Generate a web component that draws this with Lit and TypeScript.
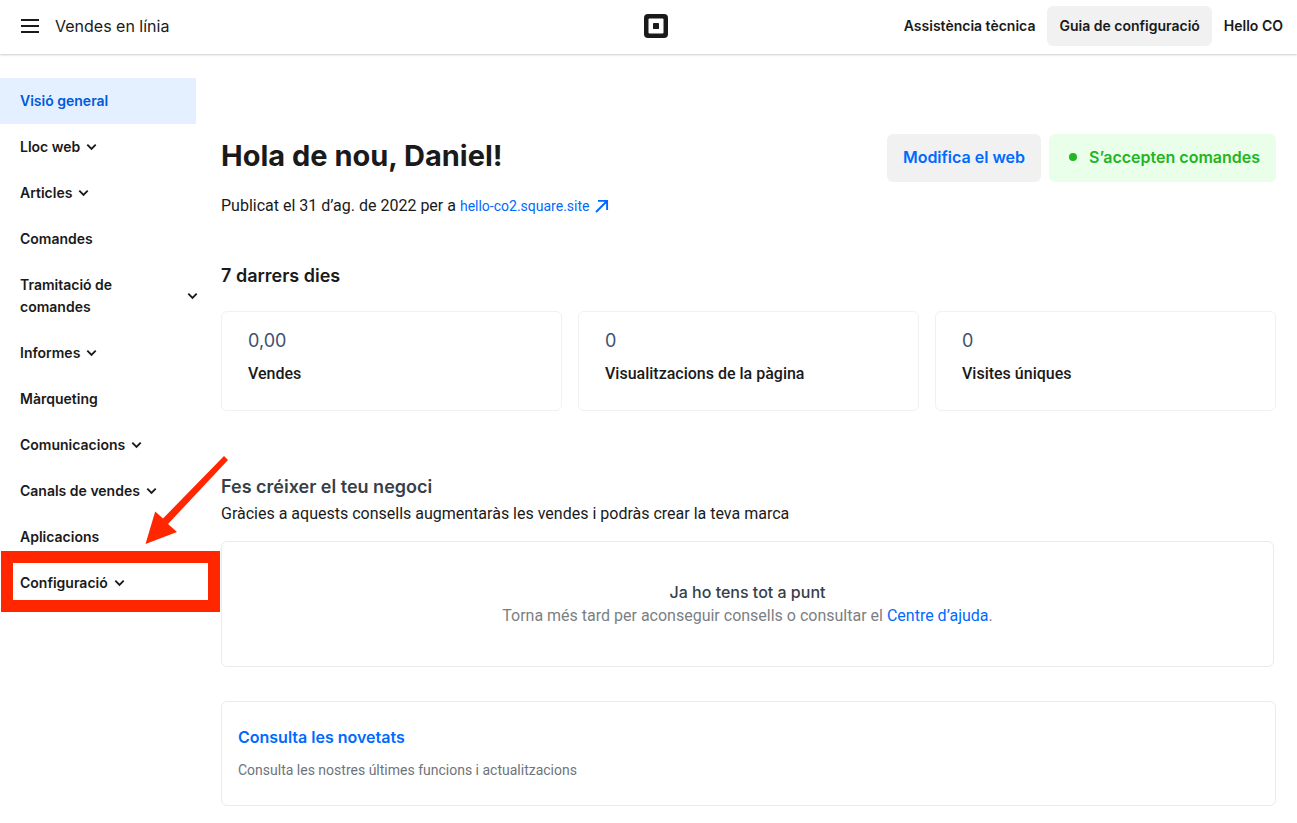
import { LitElement, html, svg, css, nothing } from "lit";
import { customElement } from "lit/decorators.js";
import { classMap } from "lit/directives/class-map.js";

interface NavItem {
  label: string;
  expandable?: boolean;
  active?: boolean;
  wide?: boolean;
  marked?: boolean;
}

const NAV: NavItem[] = [
  { label: "Visió general", active: true },
  { label: "Lloc web", expandable: true },
  { label: "Articles", expandable: true },
  { label: "Comandes" },
  { label: "Tramitació de\ncomandes", expandable: true, wide: true },
  { label: "Informes", expandable: true },
  { label: "Màrqueting" },
  { label: "Comunicacions", expandable: true },
  { label: "Canals de vendes", expandable: true },
  { label: "Aplicacions" },
  { label: "Configuració", expandable: true, marked: true },
];

const STATS = [
  { value: "0,00", label: "Vendes" },
  { value: "0", label: "Visualitzacions de la pàgina" },
  { value: "0", label: "Visites úniques" },
];

const chevron = html`<svg class="chevron" width="11" height="8" viewBox="0 0 11 8" aria-hidden="true">
  ${svg`<path d="M1.3 1.6 5.5 5.8 9.7 1.6" fill="none" stroke="currentColor" stroke-width="1.9"/>`}
</svg>`;

@customElement("app-header")
export class AppHeader extends LitElement {
  static styles = css`
    :host {
      display: block;
      font-family: Inter, sans-serif;
      color: #1a1a1a;
    }
    .bar {
      display: grid;
      grid-template-columns: 1fr auto 1fr;
      align-items: center;
      height: 54px;
      padding: 0 14px 2px 20px;
      box-sizing: border-box;
      box-shadow: 0 1px 2px rgba(0, 0, 0, 0.2);
    }
    .left {
      display: flex;
      align-items: center;
      gap: 15px;
      font-size: 16px;
      line-height: 24px;
    }
    button {
      font: inherit;
      color: inherit;
      border: 0;
      background: none;
      padding: 0;
      cursor: pointer;
    }
    .menu {
      display: flex;
    }
    .logo {
      display: flex;
      padding-left: 8px;
    }
    .right {
      display: flex;
      justify-content: flex-end;
      align-items: center;
      gap: 12px;
      font-size: 14px;
      font-weight: 600;
    }
    .guide {
      height: 40px;
      padding: 0 12px;
      border-radius: 6px;
      background: #f1f1f1;
    }
  `;

  render() {
    return html`<header class="bar">
      <div class="left">
        <button class="menu" aria-label="Menú">
          <svg width="20" height="16" viewBox="0 0 20 16" aria-hidden="true">
            <path d="M1 2h18M1 8h18M1 14h18" stroke="#1a1a1a" stroke-width="2" />
          </svg>
        </button>
        <span>Vendes en línia</span>
      </div>
      <a class="logo" href="#" aria-label="Square">
        <svg width="24" height="24" viewBox="0 0 24 24" aria-hidden="true">
          <rect width="24" height="24" rx="4" fill="#1a1a1a" />
          <rect x="4.5" y="4.5" width="15" height="15" rx="1" fill="#fff" />
          <rect x="9" y="9" width="6" height="6" rx="0.4" fill="#1a1a1a" />
        </svg>
      </a>
      <div class="right">
        <button>Assistència tècnica</button>
        <button class="guide">Guia de configuració</button>
        <button>Hello CO</button>
      </div>
    </header>`;
  }
}

@customElement("side-nav")
export class SideNav extends LitElement {
  static styles = css`
    :host {
      display: block;
      font-family: Inter, sans-serif;
      color: #1a1a1a;
    }
    ul {
      list-style: none;
      margin: 0;
      padding: 0;
    }
    li {
      position: relative;
    }
    .item {
      display: flex;
      align-items: center;
      gap: 6px;
      padding: 12px 0 12px 20px;
      font-size: 14px;
      line-height: 22px;
      font-weight: 600;
      color: inherit;
      text-decoration: none;
      white-space: pre-line;
    }
    .active {
      background: #e4f0ff;
      color: #005ad9;
    }
    .wide {
      justify-content: space-between;
      margin-right: -2px;
    }
    .chevron {
      flex: none;
    }
    .frame {
      position: absolute;
      inset: -9px -24px -6px 1px;
      border: 12px solid #ff2600;
      pointer-events: none;
    }
    .arrow {
      position: absolute;
      left: 145px;
      bottom: 62px;
      pointer-events: none;
    }
  `;

  render() {
    return html`<nav>
      <ul>
        ${NAV.map(
          (item) => html`<li>
            <a class=${classMap({ item: true, active: !!item.active, wide: !!item.wide })} href="#">
              <span>${item.label}</span>${item.expandable ? chevron : nothing}
            </a>
            ${item.marked
              ? html`<div class="frame"></div>
                  <svg class="arrow" width="84" height="88" viewBox="0 0 84 88" aria-hidden="true">
                    <path d="M0.5 88 10.2 55.5 18 62.5 79 0 83 4 23 68 32 76Z" fill="#ff2600" />
                  </svg>`
              : nothing}
          </li>`,
        )}
      </ul>
    </nav>`;
  }
}

@customElement("app-root")
export class AppRoot extends LitElement {
  static styles = css`
    :host {
      display: block;
      min-height: 100vh;
      background: #fff;
      color: #1a1a1a;
      font-family: Roboto, sans-serif;
      font-size: 16px;
      line-height: 24px;
    }
    .layout {
      display: grid;
      grid-template-columns: 196px minmax(0, 1fr);
      column-gap: 25px;
      padding: 24px 21px 17px 0;
    }
    main {
      padding-top: 56px;
    }
    h1,
    h2,
    h3,
    p {
      margin: 0;
    }
    a {
      color: #006aff;
      text-decoration: none;
    }
    .top {
      display: flex;
      justify-content: space-between;
      align-items: flex-start;
    }
    h1 {
      font-family: Inter, sans-serif;
      font-size: 29px;
      line-height: 44px;
      font-weight: 700;
    }
    .published {
      margin-top: 16px;
    }
    .site {
      font-size: 14px;
    }
    .out {
      margin-left: 6px;
      vertical-align: -2px;
    }
    .actions {
      display: flex;
      gap: 8px;
    }
    .actions button {
      display: flex;
      align-items: center;
      height: 48px;
      padding: 0 16px 2px;
      border: 0;
      border-radius: 6px;
      font-family: Inter, sans-serif;
      font-size: 16px;
      font-weight: 600;
      cursor: pointer;
    }
    .edit {
      background: #f1f1f1;
      color: #006aff;
    }
    .accepting {
      gap: 12px;
      background: #eaffea;
      color: #23b523;
    }
    .dot {
      width: 8px;
      height: 8px;
      margin-left: 4px;
      border-radius: 50%;
      background: currentColor;
    }
    h2 {
      font-family: Inter, sans-serif;
      font-size: 18px;
      line-height: 26px;
      font-weight: 600;
    }
    .week {
      margin-top: 45px;
    }
    .stats {
      display: grid;
      grid-template-columns: repeat(3, 1fr);
      gap: 16px;
      margin-top: 22px;
    }
    .card {
      border: 1px solid #ebebeb;
      border-radius: 6px;
    }
    .stat {
      padding: 16px 26px 24px;
      border-color: #f1f1f1;
    }
    .value {
      font-family: Inter, sans-serif;
      font-size: 18px;
      line-height: 26px;
      color: #3d5170;
    }
    .name {
      margin-top: 8px;
      font-weight: 500;
    }
    .grow {
      margin-top: 63px;
      color: #373f4a;
    }
    .hint {
      margin-top: 2px;
    }
    .ready {
      margin: 15px 2px 0 0;
      padding: 38px 0;
      text-align: center;
      color: #7b7f84;
    }
    h3 {
      font-family: Inter, sans-serif;
      font-size: 16px;
      line-height: 24px;
      font-weight: 500;
      color: #373f4a;
    }
    .news {
      margin-top: 34px;
      padding: 23px 16px;
    }
    .news h3 {
      font-weight: 600;
    }
    .news p {
      margin-top: 9px;
      font-size: 14px;
      line-height: 24px;
      color: #6e747b;
    }
  `;

  render() {
    return html`
      <app-header></app-header>
      <div class="layout">
        <side-nav></side-nav>
        <main>
          <div class="top">
            <div>
              <h1>Hola de nou, Daniel!</h1>
              <p class="published">
                Publicat el 31 d’ag. de 2022 per a
                <a class="site" href="#"
                  >hello-co2.square.site<svg class="out" width="14" height="14" viewBox="0 0 14 14" aria-hidden="true">
                    <path d="M1 13 12 2M3 1.9h9.1V11" fill="none" stroke="currentColor" stroke-width="1.9" /></svg
                ></a>
              </p>
            </div>
            <div class="actions">
              <button class="edit">Modifica el web</button>
              <button class="accepting"><span class="dot"></span>S’accepten comandes</button>
            </div>
          </div>

          <h2 class="week">7 darrers dies</h2>
          <div class="stats">
            ${STATS.map(
              (s) => html`<div class="card stat">
                <p class="value">${s.value}</p>
                <p class="name">${s.label}</p>
              </div>`,
            )}
          </div>

          <h2 class="grow">Fes créixer el teu negoci</h2>
          <p class="hint">Gràcies a aquests consells augmentaràs les vendes i podràs crear la teva marca</p>
          <section class="card ready">
            <h3>Ja ho tens tot a punt</h3>
            <p>Torna més tard per aconseguir consells o consultar el <a href="#">Centre d’ajuda</a>.</p>
          </section>

          <section class="card news">
            <h3><a href="#">Consulta les novetats</a></h3>
            <p>Consulta les nostres últimes funcions i actualitzacions</p>
          </section>
        </main>
      </div>
    `;
  }
}
